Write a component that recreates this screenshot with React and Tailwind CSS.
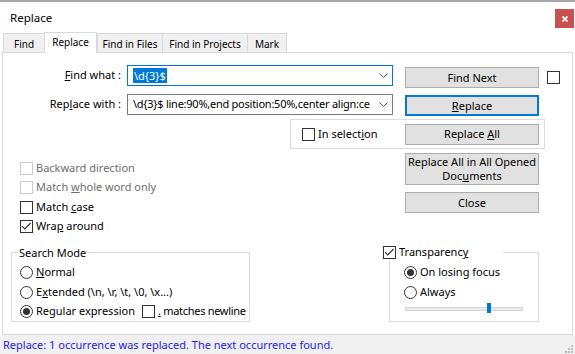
import React from 'react';

const Check = ({ checked, disabled }) => (
  <span
    className={`w-[13px] h-[13px] border bg-white flex items-center justify-center shrink-0 ${
      disabled ? 'border-[#cccccc]' : 'border-[#333333]'
    }`}
  >
    {checked && (
      <svg width="11" height="11" viewBox="0 0 11 11">
        <path d="M1 5.2 L3.8 8 L9.6 2" stroke="#333333" strokeWidth="1.1" fill="none" />
      </svg>
    )}
  </span>
);

const Radio = ({ checked }) => (
  <span className="w-[13px] h-[13px] rounded-full border border-[#333333] bg-white flex items-center justify-center shrink-0">
    {checked && <span className="w-[7px] h-[7px] rounded-full bg-[#333333]" />}
  </span>
);

const Btn = ({ children, className = '' }) => (
  <div
    className={`w-[134px] bg-[#e1e1e1] flex items-center justify-center text-center leading-[14px] ${className}`}
  >
    {children}
  </div>
);

const U = ({ children }) => <span className="underline underline-offset-[1px]">{children}</span>;

const Chevron = () => (
  <svg width="9" height="5" viewBox="0 0 9 5" className="shrink-0">
    <path d="M0.5 0.5 L4.5 4.5 L8.5 0.5" stroke="#555555" strokeWidth="1" fill="none" />
  </svg>
);

const tabs = ['Find', 'Replace', 'Find in Files', 'Find in Projects', 'Mark'];
const tabWidths = ['w-[41px]', 'w-[53px]', 'w-[65px]', 'w-[85px]', 'w-[40px]'];

export default function App() {
  return (
    <div className="w-[575px] h-[354px] bg-white flex flex-col overflow-hidden text-[11px] text-black font-['Noto_Sans','Liberation_Sans',Arial,sans-serif]">
      <div className="h-[2px] bg-[#a6a6a6] shrink-0" />

      {/* title bar */}
      <div className="h-[30px] flex items-start shrink-0">
        <span className="ml-[10px] mt-[8px] leading-[15px] text-[11.5px]">Replace</span>
        <div className="ml-auto mr-[1px] mt-[7px] w-[19px] h-[19px] bg-[#c75050] flex items-center justify-center">
          <svg width="6" height="6" viewBox="0 0 6 6">
            <path d="M0.5 0.5 L5.5 5.5 M5.5 0.5 L0.5 5.5" stroke="white" strokeWidth="1.7" />
          </svg>
        </div>
      </div>

      {/* tabs */}
      <div className="h-[20px] flex items-end pl-[3px] shrink-0 text-[10px]">
        {tabs.map((t, i) =>
          i === 1 ? (
            <div
              key={t}
              className={`${tabWidths[i]} h-[21px] -mb-px relative z-10 bg-white border border-b-0 border-[#d9d9d9] flex justify-center pt-[2px] leading-[14px]`}
            >
              {t}
            </div>
          ) : (
            <div
              key={t}
              className={`${tabWidths[i]} h-[19px] bg-[#f0f0f0] border-t border-l ${
                i === 4 ? 'border-r' : ''
              } border-[#d9d9d9] flex justify-center pt-[3px] leading-[14px]`}
            >
              {t}
            </div>
          )
        )}
      </div>

      {/* panel */}
      <div className="ml-[2px] w-[571px] h-[283px] border border-[#d9d9d9] shrink-0 flex flex-col">
        {/* find what */}
        <div className="flex items-start mt-[12px]">
          <div className="w-[118px] h-[21px] flex items-center justify-end">
            <span><U>F</U>ind what :</span>
          </div>
          <div className="ml-[6px] w-[266px] h-[21px] border border-[#0078d7] flex items-center pl-[5px] pr-[4px]">
            <span className="bg-[#0078d7] text-white leading-[15px] px-px">\d{'{'}3{'}'}$</span>
            <span className="ml-auto"><Chevron /></span>
          </div>
          <Btn className="ml-[12px] mt-[2px] h-[21px] border border-[#adadad]">Find Next</Btn>
          <span className="ml-[8px] mt-[6px]"><Check /></span>
        </div>

        {/* replace with */}
        <div className="flex items-start mt-[6px]">
          <div className="w-[118px] h-[21px] flex items-center justify-end">
            <span>Rep<U>l</U>ace with :</span>
          </div>
          <div className="ml-[6px] w-[266px] h-[21px] border border-[#7a7a7a] flex items-center pl-[5px] pr-[4px]">
            <span className="whitespace-nowrap tracking-[-0.25px]">
              \d{'{'}3{'}'}$ line:90%,end position:50%,center align:ce
            </span>
            <span className="ml-auto"><Chevron /></span>
          </div>
          <Btn className="ml-[12px] mt-[1px] h-[21px] border-2 border-[#0078d7]">
            <span><U>R</U>eplace</span>
          </Btn>
        </div>

        {/* in selection */}
        <div className="mt-[3px] ml-[287px] w-[255px] h-[30px] border border-[#dcdcdc] flex items-center">
          <div className="ml-[11px] w-[103px] flex items-center">
            <Check />
            <span className="ml-[3px]">In select<U>i</U>on</span>
          </div>
          <Btn className="h-[21px] border border-[#adadad]">
            <span>Replace <U>A</U>ll</span>
          </Btn>
        </div>

        {/* options + buttons */}
        <div className="flex items-start mt-[4px]">
          <div className="ml-[17px] w-[385px] pt-[6px] flex flex-col">
            <div className="h-[19px] flex items-center text-[#6d6d6d]">
              <Check disabled />
              <span className="ml-[3px]">Backward direction</span>
            </div>
            <div className="h-[19px] flex items-center text-[#6d6d6d]">
              <Check disabled />
              <span className="ml-[3px]">Match <U>w</U>hole word only</span>
            </div>
            <div className="h-[20px] flex items-center">
              <Check />
              <span className="ml-[3px]">Match <U>c</U>ase</span>
            </div>
            <div className="h-[19px] flex items-center">
              <Check checked />
              <span className="ml-[3px]">Wra<U>p</U> around</span>
            </div>
          </div>
          <div className="flex flex-col">
            <Btn className="h-[32px] border border-[#adadad]">
              <span>
                Replace All in All Opened
                <br />
                Doc<U>u</U>ments
              </span>
            </Btn>
            <Btn className="mt-[7px] h-[21px] border border-[#adadad]">Close</Btn>
          </div>
        </div>

        {/* group boxes */}
        <div className="flex items-start mt-[10px]">
          <fieldset className="ml-[8px] w-[239px] min-w-0 shrink-0 h-[76px] border border-[#dcdcdc] pl-[7px] pr-0 pt-[3px]">
            <legend className="leading-[13px] px-0">Search Mode</legend>
            <div className="ml-[1px] flex flex-col">
              <div className="h-[20px] flex items-center">
                <Radio />
                <span className="ml-[3px]"><U>N</U>ormal</span>
              </div>
              <div className="h-[20px] flex items-center">
                <Radio />
                <span className="ml-[3px]">E<U>x</U>tended (\n, \r, \t, \0, \x...)</span>
              </div>
              <div className="h-[19px] flex items-center whitespace-nowrap">
                <Radio checked />
                <span className="ml-[3px] w-[106px] shrink-0">Re<U>g</U>ular expression</span>
                <Check />
                <span className="ml-[3px] shrink-0 tracking-[-0.3px]"><U>.</U> matches newline</span>
              </div>
            </div>
          </fieldset>

          <fieldset className="ml-[139px] w-[150px] min-w-0 shrink-0 h-[76px] border border-[#dcdcdc] pl-0 pt-[3px]">
            <legend className="-ml-[7px] w-[120px] h-[13px] flex items-center px-0">
              <Check checked />
              <span className="ml-[3px]">Transparenc<U>y</U></span>
            </legend>
            <div className="ml-[14px] flex flex-col">
              <div className="h-[20px] flex items-center">
                <Radio checked />
                <span className="ml-[3px]">On losing focus</span>
              </div>
              <div className="h-[20px] flex items-center">
                <Radio />
                <span className="ml-[3px]">Always</span>
              </div>
              <div className="relative mt-[5px] ml-[1px] w-[118px] h-[4px] bg-[#e7eaea] border border-[#d6d6d6]">
                <div className="absolute left-[81px] -top-[5px] w-[4px] h-[10px] bg-[#0078d7]" />
              </div>
            </div>
          </fieldset>
        </div>
      </div>

      {/* status bar */}
      <div className="flex-1 bg-[#f0f0f0] flex items-center pl-[3px] pt-[1px] relative">
        <span className="text-[#2323e6]">
          Replace: 1 occurrence was replaced. The next occurrence found.
        </span>
        <svg width="8" height="8" viewBox="0 0 8 8" className="absolute right-[2px] bottom-[1px]">
          <rect x="6" y="0" width="2" height="2" fill="#bcbcbc" />
          <rect x="3" y="3" width="2" height="2" fill="#bcbcbc" />
          <rect x="6" y="3" width="2" height="2" fill="#bcbcbc" />
          <rect x="0" y="6" width="2" height="2" fill="#bcbcbc" />
          <rect x="3" y="6" width="2" height="2" fill="#bcbcbc" />
          <rect x="6" y="6" width="2" height="2" fill="#bcbcbc" />
        </svg>
      </div>
    </div>
  );
}
